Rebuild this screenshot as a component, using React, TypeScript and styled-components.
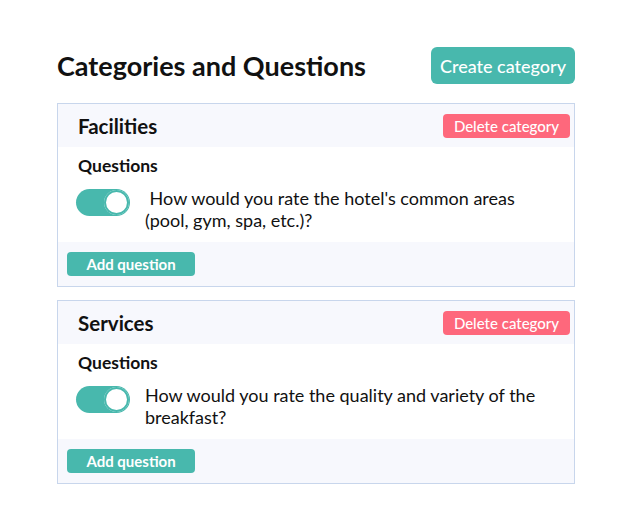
import React from "react";
import styled, { createGlobalStyle } from "styled-components";

const Global = createGlobalStyle`
  html, body { margin: 0; padding: 0; background: #ffffff; }
  body { font-family: Lato, "Open Sans", sans-serif; color: #111111; }
  * { box-sizing: border-box; }
`;

const Page = styled.div`
  width: 631px;
  padding: 47px 56px 40px 57px;
`;

const TopBar = styled.div`
  display: flex;
  align-items: center;
  justify-content: space-between;
  height: 37px;
`;

const Title = styled.h1`
  margin: 0;
  font-size: 27px;
  font-weight: 700;
  color: #111111;
  letter-spacing: 0;
`;

const Button = styled.button<{ $tone: "teal" | "pink"; $size: "lg" | "sm" }>`
  border: none;
  cursor: pointer;
  font-family: Lato, sans-serif;
  color: #ffffff;
  background: ${(p) => (p.$tone === "teal" ? "#48b8ad" : "#fe687c")};
  border-radius: ${(p) => (p.$size === "lg" ? "6px" : "4px")};
  height: ${(p) => (p.$size === "lg" ? "37px" : "24px")};
  padding: ${(p) => (p.$size === "lg" ? "0 9px" : "0 10px")};
  font-size: ${(p) => (p.$size === "lg" ? "18px" : "15px")};
  font-weight: 500;
  display: inline-flex;
  align-items: center;
  justify-content: center;
`;

const AddButton = styled(Button)`
  width: 128px;
  font-weight: 700;
  font-size: 15px;
`;

const DeleteButton = styled(Button)`
  width: 127px;
`;

const Card = styled.section`
  border: 1px solid #c8d6ec;
  background: #f7f8fd;
  margin-top: 19px;
  & + & {
    margin-top: 13px;
  }
`;

const CardHeader = styled.div`
  display: flex;
  align-items: center;
  justify-content: space-between;
  height: 43px;
  padding: 0 4px 0 20px;
`;

const CardTitle = styled.h2`
  margin: 0;
  font-size: 20.5px;
  font-weight: 700;
`;

const CardBody = styled.div`
  background: #ffffff;
  padding: 9px 20px 11px 20px;
`;

const SectionLabel = styled.div`
  font-size: 17.5px;
  font-weight: 700;
  line-height: 20px;
  margin-bottom: 11px;
`;

const QuestionRow = styled.div`
  display: flex;
  align-items: flex-start;
  gap: 15px;
`;

const Toggle = styled.span`
  flex: none;
  position: relative;
  width: 54px;
  height: 27px;
  border-radius: 14px;
  background: #48b8ad;
  margin-top: 2px;
  margin-left: -2px;
  &::after {
    content: "";
    position: absolute;
    right: 1px;
    top: 1px;
    width: 25px;
    height: 25px;
    border-radius: 50%;
    background: #ffffff;
    box-shadow: inset 0 0 0 2px #48b8ad;
  }
`;

const QuestionText = styled.div`
  font-size: 18px;
  line-height: 22px;
  color: #111111;
`;

const CardFooter = styled.div`
  height: 44px;
  display: flex;
  align-items: flex-start;
  padding: 10px 0 0 9px;
`;

const categories = [
  {
    name: "Facilities",
    questions: [" How would you rate the hotel's common areas (pool, gym, spa, etc.)?"],
  },
  {
    name: "Services",
    questions: ["How would you rate the quality and variety of the breakfast?"],
  },
];

export default function App() {
  return (
    <>
      <Global />
      <Page>
        <TopBar>
          <Title>Categories and Questions</Title>
          <Button $tone="teal" $size="lg">Create category</Button>
        </TopBar>
        {categories.map((c) => (
          <Card key={c.name}>
            <CardHeader>
              <CardTitle>{c.name}</CardTitle>
              <DeleteButton $tone="pink" $size="sm">Delete category</DeleteButton>
            </CardHeader>
            <CardBody>
              <SectionLabel>Questions</SectionLabel>
              {c.questions.map((q) => (
                <QuestionRow key={q}>
                  <Toggle />
                  <QuestionText>{q.startsWith(" ") ? "\u00a0" + q.slice(1) : q}</QuestionText>
                </QuestionRow>
              ))}
            </CardBody>
            <CardFooter>
              <AddButton $tone="teal" $size="sm">Add question</AddButton>
            </CardFooter>
          </Card>
        ))}
      </Page>
    </>
  );
}
